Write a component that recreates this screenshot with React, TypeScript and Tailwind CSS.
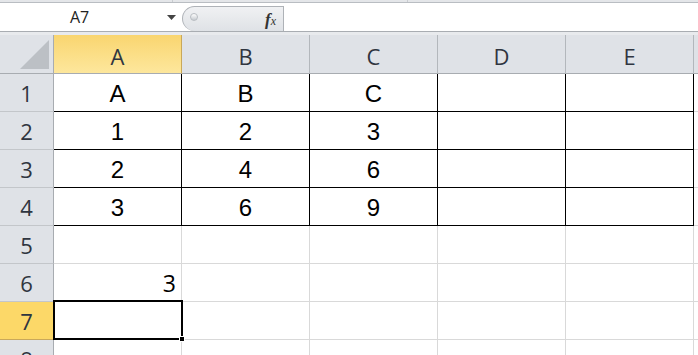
import React from "react";

const cols = ["A", "B", "C", "D", "E"];
const data: (string | null)[][] = [
  ["A", "B", "C", "", ""],
  ["1", "2", "3", "", ""],
  ["2", "4", "6", "", ""],
  ["3", "6", "9", "", ""],
];

export default function App() {
  const rows = [1, 2, 3, 4, 5, 6, 7, 8];
  return (
    <div className="w-[698px] h-[355px] overflow-hidden bg-white flex flex-col" style={{ fontFamily: '"Open Sans", sans-serif' }}>
      {/* top strip */}
      <div className="h-[3px] bg-[#e4e6e9] border-b border-[#b9bdc2] flex shrink-0">
        <div className="w-[173px] border-r border-[#c9ccd0]" />
        <div className="w-[235px] border-r border-[#c9ccd0]" />
      </div>
      {/* formula bar */}
      <div className="h-[28px] bg-white flex items-stretch shrink-0">
        <div className="w-[182px] flex items-center relative">
          <span className="pl-[70px] text-[16px] text-[#222] leading-none">A7</span>
          <svg className="absolute left-[167px] top-[12px]" width="9" height="6" viewBox="0 0 9 6">
            <path d="M0 0 L9 0 L4.5 5 Z" fill="#444" />
          </svg>
        </div>
        <div className="w-[102px] mt-[3px] rounded-l-[13px] border border-b-0 border-[#aeb2b7] bg-gradient-to-b from-[#f0f1f3] to-[#dfe2e6] relative flex items-center justify-end pr-[7px]">
          <div className="absolute left-[7px] top-[6px] w-[8px] h-[8px] rounded-full bg-gradient-to-b from-[#ffffff] to-[#c7cbd0] border border-[#b9bdc2]" />
          <span className="italic text-[17px] text-[#333] leading-none" style={{ fontFamily: '"Liberation Serif", serif' }}>
            <span className="font-bold">f</span>
            <span className="text-[12px]">x</span>
          </span>
        </div>
        <div className="flex-1 bg-white" />
      </div>
      <div className="h-[4px] border-t border-[#a9adb2] bg-[#e8eaed] shrink-0" />
      {/* sheet */}
      <div className="relative grid grid-cols-[54px_repeat(5,128px)_1fr] auto-rows-[38px] grid-rows-[39px]">
        {/* corner */}
        <div className="bg-[#dfe2e7] border-r border-b border-[#a8acb1] relative overflow-hidden">
          <svg className="absolute left-[20px] top-[5px]" width="30" height="29" viewBox="0 0 30 29">
            <path d="M29 0 L29 29 L0 29 Z" fill="#bcc0c5" />
          </svg>
        </div>
        {cols.map((c, i) => (
          <div
            key={c}
            className={
              "flex items-center justify-center pt-[4px] border-r border-b text-[22px] text-[#2f3540] " +
              (i === 0
                ? "bg-gradient-to-b from-[#f9d56f] to-[#fde79c] border-r-[#c9a85a] border-b-[#a8acb1]"
                : "bg-[#dfe2e7] border-r-[#b3b7bc] border-b-[#a8acb1]")
            }
          >
            {c}
          </div>
        ))}
        <div className="bg-[#dfe2e7] border-b border-[#a8acb1]" />
        {rows.map((r) => (
          <React.Fragment key={r}>
            <div
              className={
                "flex items-center justify-center pt-[2px] border-r border-b text-[22px] text-[#2f3540] " +
                (r === 7
                  ? "bg-[#fcd868] border-r-[#a8acb1] border-b-[#c9a85a]"
                  : "bg-[#dfe2e7] border-r-[#a8acb1] border-b-[#c3c6ca]")
              }
            >
              {r}
            </div>
            {cols.map((c, ci) => {
              const inTable = r <= 4;
              const val = inTable ? data[r - 1][ci] : r === 6 && ci === 0 ? "3" : "";
              return (
                <div
                  key={c}
                  className={
                    "flex items-center border-r border-b " +
                    (inTable ? "border-black justify-center text-[24px] pt-[2px] text-black " : "border-[#d9d9d9] ") +
                    (r === 6 && ci === 0 ? "justify-end pr-[5px] text-[23px] text-black pt-[2px]" : "")
                  }
                  style={inTable ? { fontFamily: '"Liberation Sans", Arial, sans-serif' } : undefined}
                >
                  {val}
                </div>
              );
            })}
            <div className="border-b border-[#d9d9d9]" />
          </React.Fragment>
        ))}
        {/* selection */}
        <div className="absolute left-[53px] top-[265px] w-[130px] h-[40px] border-2 border-black pointer-events-none" />
        <div className="absolute left-[179px] top-[301px] w-[6px] h-[6px] bg-black border border-white" />
      </div>
    </div>
  );
}
